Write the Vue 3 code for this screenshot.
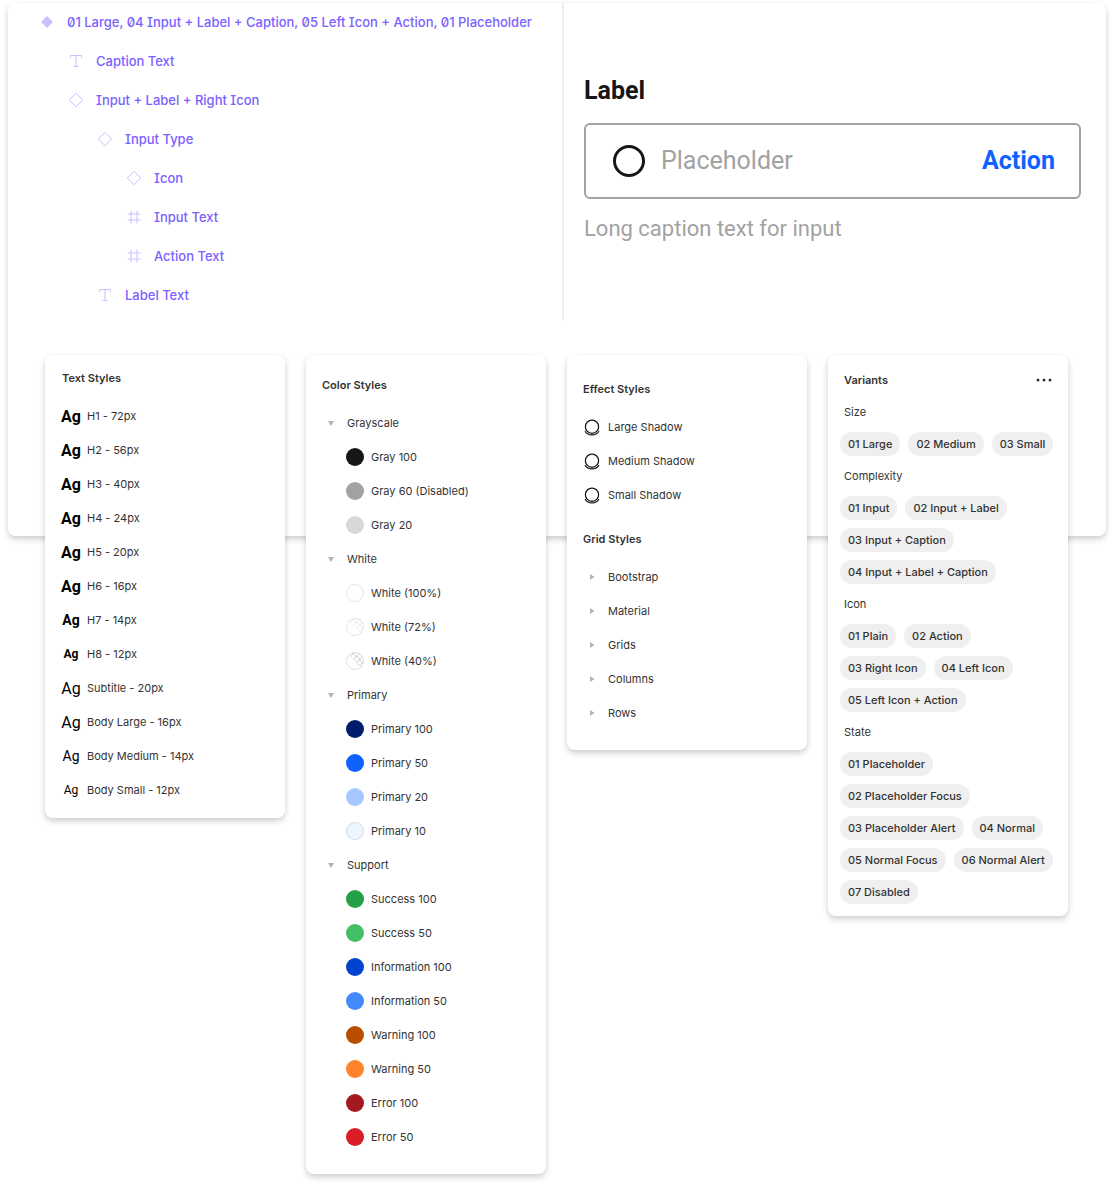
<template>
  <main class="page">
    <section class="hero">
      <ul class="layers">
        <li
          v-for="l in layers"
          :key="l.name"
          class="layer"
          :style="{ paddingLeft: `${l.level * 29}px` }"
        >
          <svg class="layer-icon" viewBox="0 0 20 20">
            <path v-if="l.icon === 'main'" class="fill" d="M10 4l6 6-6 6-6-6z" />
            <path v-else-if="l.icon === 'instance'" d="M10 3.300l6.700 6.700-6.700 6.700L3.300 10z" />
            <path v-else-if="l.icon === 'frame'" d="M7 3.500v13M13 3.500v13M3.500 7h13M3.500 13h13" />
            <path v-else d="M4.500 7V4.500h11V7M10 4.500v11M7.500 15.500h5" />
          </svg>
          <span>{{ l.name }}</span>
        </li>
      </ul>

      <div class="preview">
        <label class="label" for="demo-input">Label</label>
        <div class="field">
          <svg class="field-icon" viewBox="0 0 34 34">
            <circle cx="17" cy="17" r="14.500" />
          </svg>
          <input id="demo-input" type="text" placeholder="Placeholder" aria-describedby="demo-caption" />
          <button type="button" class="action">Action</button>
        </div>
        <p id="demo-caption" class="caption">Long caption text for input</p>
      </div>
    </section>

    <div class="cards">
      <!-- Text -->
      <section class="card text-card">
        <h2>Text Styles</h2>
        <ul>
          <li v-for="t in textStyles" :key="t.name" class="row">
            <span class="ag" :class="[t.size, { bold: t.bold }]">Ag</span>
            <span>{{ t.name }}</span>
          </li>
        </ul>
      </section>

      <!-- Color -->
      <section class="card color-card">
        <h2>Color Styles</h2>
        <template v-for="g in colorGroups" :key="g.name">
          <button type="button" class="row" aria-expanded="true">
            <svg class="icon arrow" viewBox="0 0 18 18"><path d="M6 7h6l-3 5z" /></svg>
            <span>{{ g.name }}</span>
          </button>
          <ul>
            <li v-for="c in g.colors" :key="c.name" class="row nested">
              <svg class="icon" viewBox="0 0 18 18">
                <circle cx="9" cy="9" r="9" :fill="c.hex" />
                <!-- checkerboard on the transparent half -->
                <template v-if="c.checker">
                  <pattern :id="c.checker.id" width="6" height="6" patternUnits="userSpaceOnUse">
                    <path d="M0 0h3v6h3V3H0z" :fill="c.checker.fill" />
                  </pattern>
                  <path d="M2.600 2.600A9 9 0 0 1 15.400 15.400z" :fill="`url(#${c.checker.id})`" />
                </template>
                <circle v-if="c.border" cx="9" cy="9" r="8.500" fill="none" :stroke="c.border" />
              </svg>
              <span>{{ c.name }}</span>
            </li>
          </ul>
        </template>
      </section>

      <!-- Effect + Grid -->
      <section class="card effect-card">
        <h2>Effect Styles</h2>
        <ul>
          <li v-for="e in effects" :key="e" class="row">
            <svg class="icon effect" viewBox="0 0 18 18">
              <circle cx="9" cy="8.700" r="6.600" />
              <path d="M2 13.200c3 5 11 5 14 0" />
            </svg>
            <span>{{ e }}</span>
          </li>
        </ul>
        <h2 class="second">Grid Styles</h2>
        <button v-for="g in grids" :key="g" type="button" class="row" aria-expanded="false">
          <svg class="icon arrow" viewBox="0 0 18 18"><path d="M7 6l4.500 3L7 12z" /></svg>
          <span>{{ g }}</span>
        </button>
      </section>

      <!-- Variants -->
      <section class="card variant-card">
        <header>
          <h2>Variants</h2>
          <button type="button" class="more" aria-label="More">
            <svg viewBox="0 0 16 16">
              <circle cx="2" cy="8" r="1.500" />
              <circle cx="8" cy="8" r="1.500" />
              <circle cx="14" cy="8" r="1.500" />
            </svg>
          </button>
        </header>
        <template v-for="v in variants" :key="v.name">
          <h3>{{ v.name }}</h3>
          <ul class="pills">
            <li v-for="p in v.values" :key="p">{{ p }}</li>
          </ul>
        </template>
      </section>
    </div>
  </main>
</template>

<script setup>
const layers = [
  { level: 0, icon: 'main', name: '01 Large, 04 Input + Label + Caption, 05 Left Icon + Action, 01 Placeholder' },
  { level: 1, icon: 'text', name: 'Caption Text' },
  { level: 1, icon: 'instance', name: 'Input + Label + Right Icon' },
  { level: 2, icon: 'instance', name: 'Input Type' },
  { level: 3, icon: 'instance', name: 'Icon' },
  { level: 3, icon: 'frame', name: 'Input Text' },
  { level: 3, icon: 'frame', name: 'Action Text' },
  { level: 2, icon: 'text', name: 'Label Text' }
]

const textStyles = [
  { name: 'H1 - 72px', size: 'lg', bold: true },
  { name: 'H2 - 56px', size: 'lg', bold: true },
  { name: 'H3 - 40px', size: 'lg', bold: true },
  { name: 'H4 - 24px', size: 'lg', bold: true },
  { name: 'H5 - 20px', size: 'lg', bold: true },
  { name: 'H6 - 16px', size: 'lg', bold: true },
  { name: 'H7 - 14px', size: 'md', bold: true },
  { name: 'H8 - 12px', size: 'sm', bold: true },
  { name: 'Subtitle - 20px', size: 'lg' },
  { name: 'Body Large - 16px', size: 'lg' },
  { name: 'Body Medium - 14px', size: 'md' },
  { name: 'Body Small - 12px', size: 'sm' }
]

const colorGroups = [
  {
    name: 'Grayscale',
    colors: [
      { name: 'Gray 100', hex: '#161616' },
      { name: 'Gray 60 (Disabled)', hex: '#a2a2a2' },
      { name: 'Gray 20', hex: '#d8d8d8' }
    ]
  },
  {
    name: 'White',
    colors: [
      { name: 'White (100%)', hex: '#ffffff', border: '#e5e5e5' },
      { name: 'White (72%)', hex: '#ffffff', border: '#e5e5e5', checker: { id: 'checker-72', fill: '#f1f1f1' } },
      { name: 'White (40%)', hex: '#ffffff', border: '#e0e0e0', checker: { id: 'checker-40', fill: '#e0e0e0' } }
    ]
  },
  {
    name: 'Primary',
    colors: [
      { name: 'Primary 100', hex: '#001d6c' },
      { name: 'Primary 50', hex: '#0f62fe' },
      { name: 'Primary 20', hex: '#a6c8ff' },
      { name: 'Primary 10', hex: '#edf5ff', border: '#d5dde6' }
    ]
  },
  {
    name: 'Support',
    colors: [
      { name: 'Success 100', hex: '#24a148' },
      { name: 'Success 50', hex: '#42be65' },
      { name: 'Information 100', hex: '#0043ce' },
      { name: 'Information 50', hex: '#4589ff' },
      { name: 'Warning 100', hex: '#ba4e00' },
      { name: 'Warning 50', hex: '#ff832b' },
      { name: 'Error 100', hex: '#a2191f' },
      { name: 'Error 50', hex: '#da1e28' }
    ]
  }
]

const effects = ['Large Shadow', 'Medium Shadow', 'Small Shadow']
const grids = ['Bootstrap', 'Material', 'Grids', 'Columns', 'Rows']

const variants = [
  { name: 'Size', values: ['01 Large', '02 Medium', '03 Small'] },
  { name: 'Complexity', values: ['01 Input', '02 Input + Label', '03 Input + Caption', '04 Input + Label + Caption'] },
  { name: 'Icon', values: ['01 Plain', '02 Action', '03 Right Icon', '04 Left Icon', '05 Left Icon + Action'] },
  {
    name: 'State',
    values: [
      '01 Placeholder',
      '02 Placeholder Focus',
      '03 Placeholder Alert',
      '04 Normal',
      '05 Normal Focus',
      '06 Normal Alert',
      '07 Disabled'
    ]
  }
]
</script>

<style>
body { margin: 0; background: #fff; }
</style>

<style scoped>
.page {
  padding: 3px 8px 12px;
  font-family: Inter, "Liberation Sans", sans-serif;
  font-size: 11px;
  color: #333;
}
ul { list-style: none; margin: 0; padding: 0; }
button {
  border: 0;
  padding: 0;
  background: none;
  font: inherit;
  color: inherit;
  cursor: pointer;
}

.hero {
  display: grid;
  grid-template-columns: minmax(0, 556fr) minmax(0, 542fr);
  align-items: start;
  padding-bottom: 215px;
  border-radius: 8px;
  background: #fff;
  box-shadow: 0 3px 6px rgba(0, 0, 0, .2);
}

/* 图层树 */
.layers {
  margin-top: -1px;
  padding: 0 0 7px 29px;
  border-right: 2px solid #efefef;
  font-size: 13px;
  font-weight: 500;
  color: #7b61ff;
  font-feature-settings: "zero", "cv08";
}
.layer {
  display: flex;
  align-items: center;
  gap: 10px;
  height: 39px;
  white-space: nowrap;
}
.layer-icon {
  flex: none;
  width: 20px;
  height: 20px;
  fill: none;
  stroke: #cabfff;
}
.layer-icon .fill { fill: #cabfff; stroke: none; }

/* 输入框 */
.preview {
  padding: 71px 25px 0 20px;
  font-family: Roboto, "Liberation Sans", sans-serif;
  font-size: 25px;
  line-height: 34px;
}
.label { display: block; font-weight: 700; color: #161616; }
.field {
  display: flex;
  align-items: center;
  gap: 15px;
  height: 72px;
  margin: 15px 0 13px;
  padding: 0 24px 0 26px;
  border: 2px solid #a2a2a2;
  border-radius: 6px;
}
.field-icon {
  flex: none;
  width: 34px;
  height: 34px;
  fill: none;
  stroke: #161616;
  stroke-width: 3;
}
.field input {
  flex: 1;
  min-width: 0;
  border: 0;
  padding: 0;
  outline: none;
  background: none;
  font: inherit;
  color: #161616;
}
.field input::placeholder { color: #a2a2a2; opacity: 1; }
.action { font-weight: 700; color: #0f62fe; }
.caption { margin: 0; font-size: 22px; color: #a2a2a2; }

/* 卡片 */
.cards {
  display: grid;
  grid-template-columns: repeat(4, 1fr);
  gap: 21px;
  align-items: start;
  margin: -181px 38px 0 37px;
}
.card {
  border-radius: 8px;
  background: #fff;
  box-shadow: 0 3px 6px rgba(0, 0, 0, .2);
}
.text-card { padding: 6px 17px 11px; }
.color-card { padding: 13px 16px 20px; }
.effect-card { padding: 17px 16px 20px; }
.variant-card { padding: 9px 12px 8px; }

h2 {
  margin: 0 0 4px;
  font-size: 11px;
  line-height: 34px;
  font-weight: 600;
}
h2.second { margin-top: 10px; }
.row {
  display: flex;
  align-items: center;
  gap: 7px;
  width: 100%;
  height: 34px;
  text-align: left;
}
.row.nested { padding-left: 24px; box-sizing: border-box; }
.icon { flex: none; width: 18px; height: 18px; }
.arrow { fill: #b3b3b3; }
.effect { fill: none; stroke: #111; stroke-width: 1.2; }

.ag {
  display: flex;
  justify-content: center;
  flex: none;
  width: 18px;
  font-family: Roboto, "Liberation Sans", sans-serif;
  color: #000;
}
.ag.bold { font-weight: 700; }
.ag.lg { font-size: 16px; }
.ag.md { font-size: 14px; }
.ag.sm { font-size: 12px; }

.variant-card header {
  display: flex;
  align-items: center;
  justify-content: space-between;
  padding: 0 4px;
}
.variant-card h2 { margin: 0; line-height: 32px; }
.more { display: flex; }
.more svg { width: 16px; height: 16px; fill: #333; }
h3 {
  margin: 0;
  padding: 0 4px;
  font-size: 11px;
  line-height: 32px;
  font-weight: 400;
}
.pills {
  display: flex;
  flex-wrap: wrap;
  gap: 8px;
  padding: 4px 0;
}
.pills li {
  padding: 0 8px;
  border-radius: 12px;
  background: #efefef;
  line-height: 24px;
  font-weight: 500;
  white-space: nowrap;
}
</style>
